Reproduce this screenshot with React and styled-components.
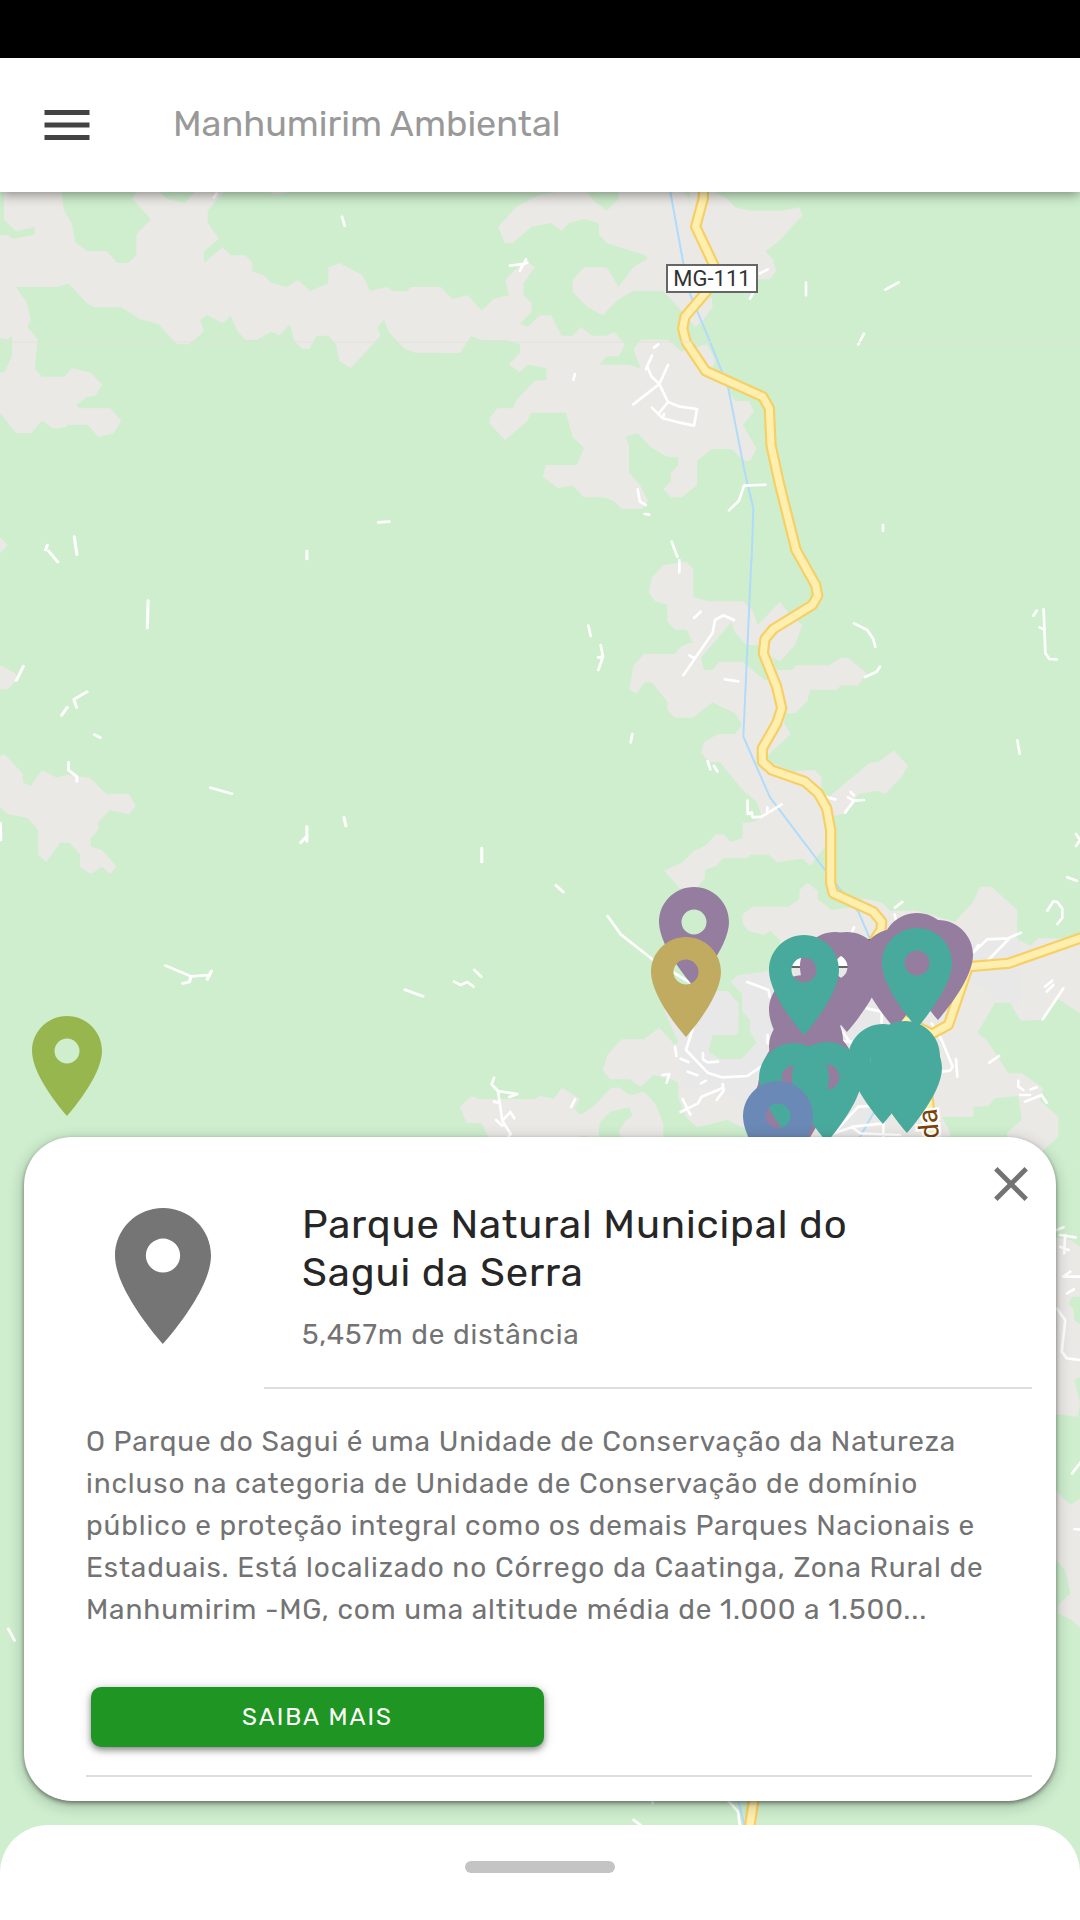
import React from "react";
import styled, { createGlobalStyle } from "styled-components";

const GlobalStyle = createGlobalStyle`
  *, *::before, *::after { box-sizing: border-box; }
  body { margin: 0; background: #ceeece; }
  body, button { font-family: Rubik, Inter, Roboto, sans-serif; }
`;

const Page = styled.div`
  display: flex;
  flex-direction: column;
  min-height: 100vh;
`;

const StatusBar = styled.div`
  height: 58px;
  background: #000;
`;

const Toolbar = styled.header`
  position: relative;
  z-index: 2;
  display: flex;
  align-items: center;
  gap: 76px;
  height: 134px;
  padding: 0 37px;
  background: #fff;
  box-shadow: 0 2px 12px rgba(0, 0, 0, 0.45);
`;

const IconButton = styled.button`
  display: flex;
  padding: 0;
  border: 0;
  background: none;
  color: ${(p) => p.$color};
  cursor: pointer;
`;

const AppTitle = styled.h1`
  margin: 0 0 2px;
  font-size: 36px;
  line-height: 48px;
  font-weight: 400;
  color: #999;
`;

const MapArea = styled.main`
  position: relative;
  flex: 1;
  display: flex;
  flex-direction: column;
  justify-content: flex-end;
  overflow: hidden;
`;

const MapCanvas = styled.svg`
  position: absolute;
  inset: 0;
  width: 100%;
  height: 100%;
`;

const Card = styled.article`
  position: relative;
  margin: 0 24px 24px;
  padding: 0 24px 24px 62px;
  border-radius: 48px;
  background: #fff;
  box-shadow: 0 2px 4px rgba(0, 0, 0, 0.42), 0 4px 16px rgba(0, 0, 0, 0.24);
  font-size: 28px;
  letter-spacing: 0.03125em;
`;

const CloseButton = styled(IconButton)`
  position: absolute;
  top: 18px;
  right: 16px;
`;

const CardHead = styled.header`
  display: flex;
`;

const CardIcon = styled.div`
  width: 178px;
  padding: 71px 0 0 29px;
`;

const CardHeading = styled.div`
  flex: 1;
  padding: 64px 150px 36px 38px;
  border-bottom: 2px solid #dedede;
`;

const PlaceName = styled.h2`
  margin: 0 0 22px;
  font-size: 40px;
  line-height: 48px;
  font-weight: 400;
  color: #262626;
`;

const BodyText = styled.p`
  margin: 0;
  line-height: ${(p) => p.$leading}px;
  color: #737373;
`;

const CardBody = styled.div`
  padding: 32px 40px 28px 0;
`;

const MoreButton = styled.button`
  display: block;
  width: 50%;
  height: 60px;
  margin: 56px 0 0 5px;
  border: 0;
  border-radius: 10px;
  background: #1f9623;
  box-shadow: 0 3px 6px rgba(0, 0, 0, 0.4), 0 2px 14px rgba(0, 0, 0, 0.14);
  color: #fff;
  font-size: 24px;
  letter-spacing: 2px;
  text-transform: uppercase;
  cursor: pointer;
`;

const Divider = styled.hr`
  margin: 0;
  border: 0;
  border-top: 2px solid #dedede;
`;

const Sheet = styled.section`
  position: relative;
  display: flex;
  justify-content: center;
  height: 95px;
  padding-top: 36px;
  border-radius: 48px 48px 0 0;
  background: #fff;
`;

const SheetHandle = styled.button`
  width: 150px;
  height: 12px;
  padding: 0;
  border: 0;
  border-radius: 6px;
  background: #c4c4c4;
`;

const LAND = "#ebe9e5";
const TOWN = "#e8e8e8";
const WOODS = "#ceeece";

/* Map tiles: each has its own origin and unit scale. */
const tiles = {
  northWest: "translate(0 190) scale(.33333)",
  north: "translate(440 190) scale(.33333)",
  valley: "translate(580 560) scale(.33333)",
  west: "translate(0 480) scale(.38265 .33333)",
  southWest: "translate(0 900) scale(.40816 .33333)",
  south: "translate(440 860) scale(.33333)",
  town: "translate(620 860) scale(.33333)",
  east: "translate(540 1120) scale(.34439 .33333)",
  southEast: "translate(540 1500) scale(.34439 .33333)",
  edge: "translate(0 1390) scale(.38265 .338)",
};

const areas = [
  ["northWest", LAND, "12,0 12,88 48,124 104,111 104,134 38,147 24,135 0,135 0,445 24,448 36,437 36,498 13,547 0,547 0,668 48,729 94,729 126,692 160,716 201,711 201,704 263,704 295,740 341,730 364,692 331,655 240,655 228,646 261,620 286,618 306,583 272,548 216,535 192,560 126,560 104,535 113,448 82,411 92,389 82,341 48,291 172,291 206,281 261,340 284,352 364,352 420,388 474,401 530,462 567,463 612,424 600,389 622,376 668,400 692,378 712,424 737,449 770,449 814,425 838,436 870,402 882,450 905,476 928,476 950,437 985,437 1008,463 1018,513 1052,535 1142,437 1132,411 1153,389 1165,425 1213,476 1245,488 1380,488 1413,437 1445,449 1516,449 1516,318 1480,328 1446,363 1402,316 1356,328 1323,291 1232,291 1222,303 1177,303 1163,291 1110,303 1088,256 1018,219 985,232 985,280 930,303 894,269 860,291 815,279 790,255 757,244 757,218 737,196 691,196 668,172 612,218 612,183 657,147 623,99 623,62 668,10 675,0 590,0 555,39 500,26 475,0 415,0 397,26 453,88 409,133 409,195 385,219 352,219 320,183 261,183 227,159 215,99 192,62 183,0"],
  ["northWest", LAND, "805,0 820,14 870,6 870,0"],
  ["north", LAND, "0,292 36,328 82,316 126,363 160,328 206,316 196,269 244,220 262,215 284,231 251,280 251,316 275,340 275,365 240,401 262,411 300,376 333,376 365,437 398,437 422,411 456,437 500,437 522,425 555,463 536,499 500,499 478,524 567,524 602,535 580,480 602,449 684,449 725,485 800,463 826,510 815,540 860,590 885,633 928,633 941,665 909,706 950,777 930,812 912,812 875,777 815,777 771,812 771,886 725,922 692,922 670,897 692,875 692,850 715,825 715,802 680,800 633,772 593,730 556,740 567,765 567,848 600,885 624,933 605,957 545,957 522,933 490,922 432,922 398,886 354,895 308,860 318,825 410,825 432,775 398,740 378,668 274,668 262,692 195,751 149,700 149,684 172,655 218,655 230,630 284,572 319,570 319,535 262,524 240,547 206,524 240,488 240,463 196,449 126,449 92,437 60,488 0,488"],
  ["north", LAND, "350,6 295,16 230,50 174,111 194,159 218,159 274,111 333,99 365,123 387,99 432,87 477,99 477,133 500,159 615,196 624,206 580,232 536,290 500,232 432,232 398,270 398,305 443,352 488,376 536,328 580,303 670,303 725,363 765,411 790,390 818,350 815,325 780,300 900,280 950,268 990,268 1008,242 998,206 975,184 1015,155 1088,75 1078,52 1030,62 930,62 885,52 860,25 810,0 750,0 750,62 748,25 725,0 536,0 536,28 500,62 465,35 435,0"],
  ["valley", LAND, "250,15 320,5 340,28 340,112 385,124 488,124 512,145 523,165 532,196 600,125 625,160 667,196 645,255 600,304 575,290 590,330 635,330 648,316 748,316 783,293 804,293 860,340 836,376 783,376 770,389 690,389 682,422 646,460 615,460 612,490 632,522 570,580 555,600 640,635 660,632 704,630 725,652 725,690 745,712 870,608 897,605 941,571 984,617 965,650 916,702 893,692 835,702 795,760 745,772 735,860 690,918 668,896 590,907 567,884 512,884 500,895 430,895 408,918 375,930 375,955 350,985 300,985 252,932 308,907 342,872 375,858 408,823 430,823 453,846 488,835 488,788 522,786 545,770 530,725 488,690 420,607 385,605 364,578 372,545 415,522 465,522 487,495 465,460 397,427 340,473 285,473 262,450 262,425 215,367 194,367 170,401 148,388 160,318 192,282 285,282 305,258 338,247 320,209 285,209 262,185 262,135 225,123 206,97 215,53"],
  ["valley", WOODS, "455,185 465,218 500,255 545,255 545,300 590,335 555,362 488,305 418,305 397,330 372,330 363,293"],
  ["valley", LAND, "488,1062 520,1040 625,1040 658,1018 658,990 682,968 713,992 713,1018 755,1050 835,1040 850,1015 905,1028 930,1052 1010,1052 1125,1085 1180,1025 1200,980 1235,980 1312,1050 1312,1135 1345,1160 1370,1136 1510,1136 1510,1200 600,1200 600,1140 570,1112 553,1125 505,1112 488,1090"],
  ["town", LAND, "480,235 1390,235 1390,920 1100,920 560,850 480,500"],
  ["west", LAND, "0,172 20,195 0,220"],
  ["west", LAND, "0,556 40,580 45,600 20,628 0,628"],
  ["west", LAND, "0,828 12,822 60,882 60,907 80,918 110,870 148,893 175,884 235,893 277,941 337,941 355,977 337,1003 286,991 257,1027 257,1050 237,1075 237,1100 267,1111 305,1160 288,1182 267,1160 237,1182 209,1160 209,1123 182,1088 158,1088 120,1147 100,1125 100,1050 72,1014 20,1002 0,982"],
  ["south", LAND, "545,538 612,538 658,503 705,555 715,545 690,490 672,450 800,393 862,393 895,430 895,515 885,525 817,525 805,575 838,597 905,597 950,549 930,512 930,478 907,455 907,402 873,366 895,345 980,358 980,850 960,805 910,803 862,780 770,802 738,770 715,715 715,668 690,656 640,645 602,681 570,658 510,658 488,630 502,585"],
  ["south", LAND, "60,742 94,708 118,717 285,717 300,708 342,716 365,683 420,716 402,745 422,765 465,735 512,684 535,682 570,706 612,695 645,730 670,790 670,840 545,840 536,812 555,785 578,766 567,742 510,755 478,790 476,840 430,826 400,840 145,850 142,825 126,790 80,788"],
  ["south", TOWN, "672,450 800,393 862,393 895,430 895,515 885,525 817,525 805,575 838,597 905,597 950,549 930,512 930,478 907,455 907,402 873,366 895,345 1010,330 1180,225 1420,260 1520,330 1600,240 1740,240 1740,440 1675,420 1600,365 1500,365 1400,400 1400,500 1430,600 1480,640 1300,740 1280,850 960,850 950,740 800,685 725,680 715,545"],
  ["town", WOODS, "1125,428 1170,428 1202,482 1260,480 1315,418 1390,465 1390,920 1260,920 1260,880 1315,830 1315,770 1260,722 1270,685 1205,640 1165,640 1100,540 1072,520"],
  ["town", WOODS, "965,770 1060,770 1060,740 1105,738 1125,715 1195,708 1205,780 1160,820 1165,850 990,850 990,815"],
  ["town", WOODS, "1190,235 1230,258 1255,235 1390,235 1390,180 1195,180"],
  ["east", LAND, "1580,390 1540,360 1480,350 1480,880 1562,890 1568,850 1552,780 1580,765 1580,620 1550,600 1550,570 1535,550 1545,530 1580,530"],
  ["east", LAND, "1480,1095 1540,1155 1580,1130 1580,1320 1480,1320"],
  ["southEast", LAND, "1480,0 1525,0 1545,15 1568,0 1580,0 1580,395 1545,360 1505,340 1505,315 1540,280 1525,210 1480,160"],
];

const lanes = {
  northWest: "M1026 80l8 27M650 10l-8 12",
  north:
    "M210 227L250 222 262 218M258 208L240 242M655 463L642 473M636 497L618 537M622 530L635 560 658 582 684 636 720 650 771 657 762 707 715 697 668 685 636 653M684 525L658 582 580 643M684 636L655 672M672 672L668 685M405 552L400 570M983 238L960 250M938 312L930 326M1098 278V316M1336 299L1376 277M1272 431L1255 463M593 898L600 935 617 945M614 972L628 974M976 884L912 887 897 932 867 961M1329 1005V1022M695 1055L712 1100",
  valley:
    "M298 0V37M342 174L362 155M310 346L398 218 405 180 430 166 462 180M328 286L342 294M435 358L475 364M25 197L32 228M62 255L69 290 55 330M54 292L69 290M822 190L862 210 880 238 886 260M855 351L890 335 900 320M1360 167L1370 152M1391 148L1396 280 1408 297 1430 298M1379 202L1391 208M157 522L152 547M383 604L391 628M402 618L412 634M503 722V762L515 757 518 772 545 770 605 733M562 742V757M740 712L766 718M804 712L822 722 852 720M822 722L795 758M812 696L822 706M1312 541L1319 581M1488 822L1500 840 1488 858M1462 952L1490 962M945 1043L967 1026M944 1064L948 1080M822 1102L815 1120M1402 1052L1420 1024 1432 1026 1447 1046V1074L1432 1092M1323 1118L1285 1135 1222 1138 1182 1175 1195 1155M1285 1138L1225 1200",
  west:
    "M194 170L201 224M124 195L119 210M127 213L151 246M387 362L385 444M989 127L1017 125M802 213V237M61 559L43 601M228 635L193 658 200 682M176 682L161 706M247 764L262 773M179 847V870L201 890V904M550 923L606 941M899 1012L904 1038M802 1040V1084M802 1068L786 1088M1259 1104V1146M1453 1216L1472 1236M1 1030L2 1080",
  southWest: "M406 197L468 229 513 225 518 213M513 225L508 238M468 229L464 246 448 250M992 269L1036 289",
  south:
    "M503 168L542 223 640 300 750 368M103 330L124 350M42 365L62 375 82 366 100 380M162 653L155 673 174 693 232 702 208 711M174 693L187 782 212 822 195 845M187 782L211 756 223 775M168 780L187 797M162 725L175 728M405 718L393 741M705 560L709 588M722 596L745 606M760 500L738 570 803 638 845 652 922 648 970 615M789 580V598L803 607 834 605M743 635L772 646M798 662L783 670M668 645L688 642 680 668M722 756L774 730 785 710 846 685M848 672L851 692 830 720M728 717L751 764M922 366L960 380 985 390 990 412",
  town: "M640 820L715 740 760 738M695 800L720 820 840 825M640 820L700 800 790 790V834M660 505L700 560M740 445L785 455V490M935 490L965 540 998 620 990 632 965 635M1008 598L1012 650M1137 588L1108 608M1275 380L1297 362M1280 395L1300 375M1330 385L1268 478M1195 662V680L1210 690M1200 705H1230M1215 725L1265 705M1268 710L1280 728M1232 688L1250 682M443 525V550M670 545H700",
  east: "M1500 330L1520 322M1510 345L1555 352M1525 345L1522 400M1510 380L1535 390M1520 470L1540 455M1520 470H1580M1530 520L1550 508M1500 565L1525 600 1515 695 1530 715 1568 720M1545 1060L1575 1020M1552 1227L1580 1230",
  southEast: "M545 900L575 935 580 975M325 900L327 910M272 960L292 975",
  edge: "M22 707L38 741",
};

const rivers = {
  north: "M690 0L730 220 750 312 810 455 865 595 915 850 940 955 935 1110",
  valley: "M514 0L490 530 570 712 735 930 770 975 835 1055 880 1160",
  town: "M760 760L715 840",
  southEast: "M575 900L595 980",
};

const highways = {
  north: "M790 0V25L767 110 833 250 795 310 735 380 728 415 738 455 797 543 968 620 988 655 993 765 1018 880 1068 1080",
  valley:
    "M648 -30L707 75 713 107 697 135 580 207 555 237 550 280 590 380 605 445 590 490 547 565V605L575 630 675 665 715 700 740 745 752 810V970L760 1000 880 1055 905 1085 903 1110 870 1160",
  town: "M1400 228L1165 310 1045 320 985 495 935 522 855 480M905 560L930 760 935 850",
  southEast: "M622 890L608 985",
};

const PURPLE = "#947d9e";
const TEAL = "#48aa9d";
const OLIVE = "#97b64d";
const GOLD = "#c0ab60";
const BLUE = "#6b89b6";

/* Tip position of every marker. */
const markers = [
  [67, 1116, OLIVE],
  [694, 987, PURPLE],
  [686, 1037, GOLD],
  [847, 1032, PURPLE],
  [835, 1032, PURPLE],
  [895, 1029, PURPLE],
  [938, 1020, PURPLE],
  [917, 1013, PURPLE],
  [790, 1164, PURPLE],
  [793, 1152, PURPLE],
  [818, 1130, PURPLE],
  [798, 1136, PURPLE],
  [808, 1105, PURPLE],
  [804, 1112, PURPLE],
  [804, 1075, PURPLE],
  [804, 1035, TEAL],
  [917, 1028, TEAL],
  [794, 1143, TEAL],
  [827, 1142, TEAL],
  [907, 1133, TEAL],
  [905, 1121, TEAL],
  [883, 1124, TEAL],
  [778, 1181, BLUE],
];

const PIN_PATH =
  "M12 2C8.13 2 5 5.13 5 9c0 5.25 7 13 7 13s7-7.75 7-13c0-3.87-3.13-7-7-7zm0 9.5a2.5 2.5 0 1 1 0-5 2.5 2.5 0 0 1 0 5z";

function TileLines({ lines, color, width }) {
  return (
    <g fill="none" stroke={color} strokeWidth={width} strokeLinecap="round" strokeLinejoin="round">
      {Object.entries(lines).map(([tile, d]) => (
        <path key={tile} d={d} transform={tiles[tile]} />
      ))}
    </g>
  );
}

function TerrainMap() {
  return (
    <MapCanvas viewBox="0 192 1080 1728" preserveAspectRatio="xMidYMin slice" role="img" aria-label="Mapa de Manhumirim">
      <rect y="192" width="1080" height="1728" fill={WOODS} />
      {areas.map(([tile, fill, points], i) => (
        <polygon key={i} points={points} fill={fill} transform={tiles[tile]} />
      ))}
      <TileLines lines={rivers} color="#b0dbfb" width={6} />
      <TileLines lines={lanes} color="#fff" width={8} />
      <TileLines lines={highways} color="#f6cf65" width={34} />
      <TileLines lines={highways} color="#ffefae" width={21} />
      <path d="M0 342H1080" stroke="#dfe3da" />
      <rect x="667" y="265" width="90" height="27" fill="#fff" stroke="#666" strokeWidth="2" />
      <text x="712" y="286" textAnchor="middle" fontFamily="Roboto, sans-serif" fontSize="22" fill="#333">
        MG-111
      </text>
      <rect x="790" y="940" width="90" height="27" fill="#fff" stroke="#666" strokeWidth="2" />
      <text
        transform="translate(939 1138) rotate(-95)"
        fontFamily="Roboto, sans-serif"
        fontSize="27"
        fill="#7a4308"
        stroke="#fff"
        strokeWidth="5"
        paintOrder="stroke"
      >
        da
      </text>
      {markers.map(([x, y, fill], i) => (
        <path key={i} d={PIN_PATH} fill={fill} transform={`translate(${x - 60} ${y - 110}) scale(5)`} />
      ))}
    </MapCanvas>
  );
}

export default function App() {
  return (
    <>
      <GlobalStyle />
      <Page>
        <StatusBar />
        <Toolbar>
          <IconButton type="button" aria-label="Abrir menu" $color="#434343">
            <svg width="60" height="60" viewBox="0 0 24 24" fill="currentColor">
              <path d="M3 18h18v-2H3v2zm0-5h18v-2H3v2zm0-7v2h18V6H3z" />
            </svg>
          </IconButton>
          <AppTitle>Manhumirim Ambiental</AppTitle>
        </Toolbar>
        <MapArea>
          <TerrainMap />
          <Card>
            <CardHead>
              <CardIcon>
                <svg width="96" height="136" viewBox="5 2 14 20" preserveAspectRatio="none" fill="#757575">
                  <path d={PIN_PATH} />
                </svg>
              </CardIcon>
              <CardHeading>
                <PlaceName>Parque Natural Municipal do Sagui da Serra</PlaceName>
                <BodyText $leading={32}>5,457m de distância</BodyText>
              </CardHeading>
            </CardHead>
            <CloseButton type="button" aria-label="Fechar" $color="#737373">
              <svg width="58" height="58" viewBox="0 0 24 24" fill="currentColor">
                <path d="M19 6.41L17.59 5 12 10.59 6.41 5 5 6.41 10.59 12 5 17.59 6.41 19 12 13.41 17.59 19 19 17.59 13.41 12z" />
              </svg>
            </CloseButton>
            <CardBody>
              <BodyText $leading={42}>
                O Parque do Sagui é uma Unidade de Conservação da Natureza incluso na categoria de
                Unidade de Conservação de domínio público e proteção integral como os demais Parques
                Nacionais e Estaduais. Está localizado no Córrego da Caatinga, Zona Rural de
                Manhumirim -MG, com uma altitude média de 1.000 a 1.500...
              </BodyText>
              <MoreButton type="button">Saiba mais</MoreButton>
            </CardBody>
            <Divider />
          </Card>
          <Sheet>
            <SheetHandle type="button" aria-label="Expandir painel" />
          </Sheet>
        </MapArea>
      </Page>
    </>
  );
}
